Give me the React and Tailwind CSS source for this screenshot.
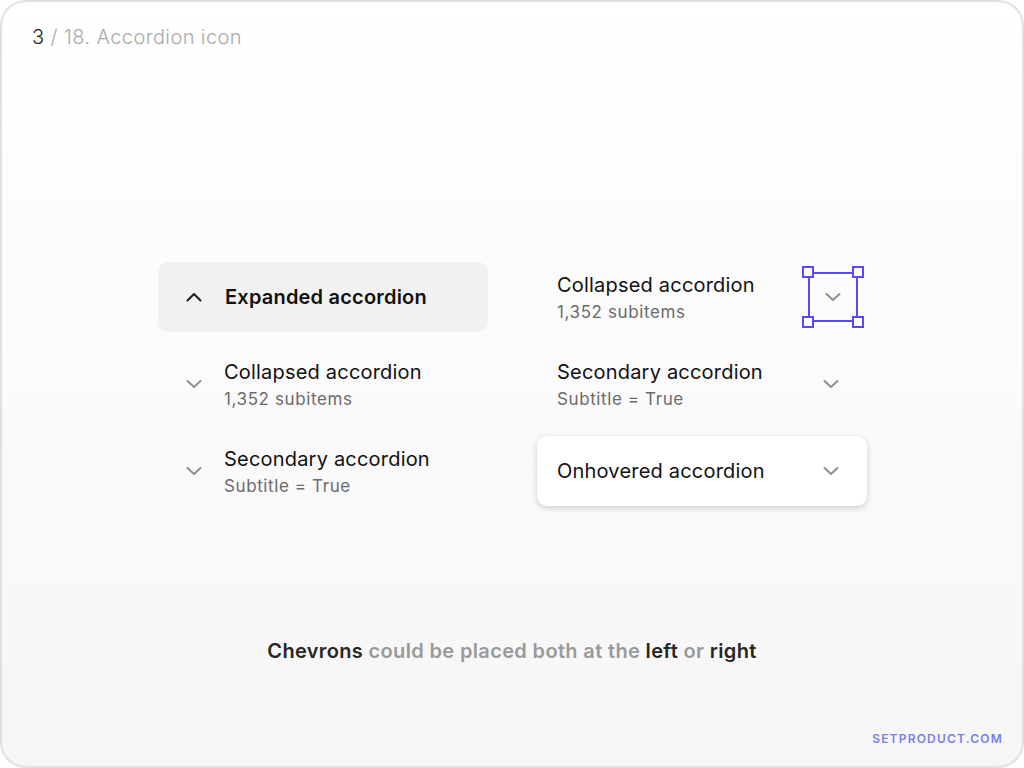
const font = { fontFamily: 'Inter, "Noto Sans", sans-serif' }

function Chevron({ up = false, dark = false }) {
  return (
    <svg width="20" height="20" viewBox="0 0 20 20" fill="none" className="shrink-0">
      <path
        d={up ? 'M3.5 13.5 L10 7 L16.5 13.5' : 'M3.5 7 L10 13 L16.5 7'}
        stroke={dark ? '#1f1f1f' : '#8f8f8f'}
        strokeWidth="2"
        strokeLinecap="round"
        strokeLinejoin="round"
      />
    </svg>
  )
}

function Handle() {
  return <div className="w-[12px] h-[12px] bg-white border-2 border-[#5b47ff]" />
}

function SelectedChevron() {
  return (
    <div className="relative w-[50px] h-[50px] flex items-center justify-center">
      <div className="absolute inset-0 border-2 border-[#5b47ff]" />
      <div className="absolute -left-[6px] -top-[6px]"><Handle /></div>
      <div className="absolute -right-[6px] -top-[6px]"><Handle /></div>
      <div className="absolute -left-[6px] -bottom-[6px]"><Handle /></div>
      <div className="absolute -right-[6px] -bottom-[6px]"><Handle /></div>
      <Chevron />
    </div>
  )
}

function Titles({ title, subtitle }) {
  return (
    <div className={subtitle ? 'flex flex-col mt-[4px]' : 'flex flex-col'}>
      <span className="text-[20px] leading-[26px] text-[#111] tracking-[0.2px]">{title}</span>
      {subtitle && (
        <span className="text-[17px] leading-[29px] text-[#6b6b6b] tracking-[0.6px]">{subtitle}</span>
      )}
    </div>
  )
}

export default function App() {
  return (
    <div className="w-[1024px] h-[768px] bg-white" style={font}>
      <div className="w-full h-full rounded-[26px] border-2 border-[#e0e0e0] bg-gradient-to-b from-white to-[#f6f6f6] flex flex-col relative">
        {/* Header */}
        <div className="pl-[30px] pt-[22px] text-[20px] leading-[26px] font-light tracking-[0.4px] text-[#aaa]">
          <span className="text-[#222]">3</span> / 18. Accordion icon
        </div>

        {/* Grid */}
        <div className="mt-[212px] ml-[156px] grid grid-cols-[330px_330px] gap-x-[49px] gap-y-[17px]">
          <div className="h-[70px] rounded-[10px] bg-[#f1f1f1] flex items-center pl-[26px] gap-[21px]">
            <Chevron up dark />
            <span className="text-[20px] font-semibold text-[#111] tracking-[0.2px]">Expanded accordion</span>
          </div>
          <div className="h-[70px] flex items-center justify-between pl-[20px] pr-[9px]">
            <Titles title="Collapsed accordion" subtitle="1,352 subitems" />
            <SelectedChevron />
          </div>

          <div className="h-[70px] flex items-center pl-[26px] gap-[20px]">
            <Chevron />
            <Titles title="Collapsed accordion" subtitle="1,352 subitems" />
          </div>
          <div className="h-[70px] flex items-center justify-between pl-[20px] pr-[26px]">
            <Titles title="Secondary accordion" subtitle="Subtitle = True" />
            <Chevron />
          </div>

          <div className="h-[70px] flex items-center pl-[26px] gap-[20px]">
            <Chevron />
            <Titles title="Secondary accordion" subtitle="Subtitle = True" />
          </div>
          <div className="h-[70px] rounded-[10px] bg-white shadow-[0_2px_6px_rgba(0,0,0,0.18)] flex items-center justify-between pl-[20px] pr-[26px]">
            <Titles title="Onhovered accordion" />
            <Chevron />
          </div>
        </div>

        {/* Caption */}
        <div className="mt-[130px] text-center text-[20px] font-semibold tracking-[0.35px] text-[#9a9a9a]">
          <span className="text-[#262626]">Chevrons</span> could be placed both at the{' '}
          <span className="text-[#262626]">left</span> or <span className="text-[#262626]">right</span>
        </div>

        <div className="absolute right-[19px] bottom-[18px] text-[12px] font-semibold tracking-[1.2px] text-[#7a80e6]">
          SETPRODUCT.COM
        </div>
      </div>
    </div>
  )
}
